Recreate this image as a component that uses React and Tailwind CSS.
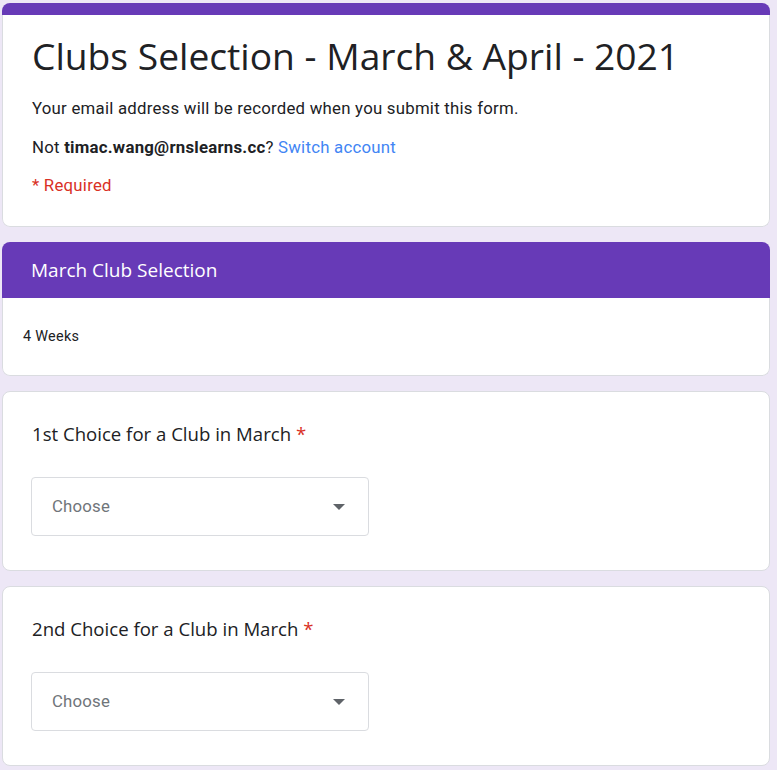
export default function App() {
  const gs = { fontFamily: '"Open Sans", "Liberation Sans", sans-serif' };
  const rb = { fontFamily: 'Roboto, "Liberation Sans", sans-serif' };
  const Arrow = () => (
    <svg width="12" height="6" viewBox="0 0 12 6" className="block">
      <path d="M0 0 L12 0 L6 6 Z" fill="#5f6368" />
    </svg>
  );
  const Question = ({ title }) => (
    <div className="bg-white border border-[#dadce0] rounded-lg h-[180px] pl-[29px] pt-[28px]">
      <div className="h-[28px] flex items-center text-[18.6px] text-[#202124]" style={gs}>
        <span>{title}</span>
        <span className="text-[#d93025] ml-[5px]">*</span>
      </div>
      <div className="mt-[29px] -ml-[1px] w-[338px] h-[59px] border border-[#dadce0] rounded-[4px] flex items-center justify-between pl-[20px] pr-[23px]">
        <span className="text-[16.8px] tracking-[0.2px] text-[#70757a]" style={rb}>Choose</span>
        <Arrow />
      </div>
    </div>
  );
  return (
    <div className="min-h-[770px] bg-[#ede7f6] pl-[2px] pr-[7px] pt-[3px] flex flex-col gap-[15px]">
      <div className="rounded-lg overflow-hidden">
        <div className="h-[12px] bg-[#673ab7]" />
        <div className="bg-white border-x border-b border-[#dadce0] rounded-b-lg h-[212px] pl-[29px] pt-[17px]">
          <div className="text-[37.2px] leading-[48px] text-[#202124]" style={gs}>
            Clubs Selection - March &amp; April - 2021
          </div>
          <div className="mt-[16px] text-[16.8px] tracking-[0.24px] leading-[24px] text-[#202124]" style={rb}>
            Your email address will be recorded when you submit this form.
          </div>
          <div className="mt-[15px] text-[16.8px] tracking-[0.24px] leading-[24px] text-[#202124]" style={rb}>
            Not <span className="font-bold">timac.wang@rnslearns.cc</span>?{" "}
            <span className="text-[#4285f4]">Switch account</span>
          </div>
          <div className="mt-[14px] text-[16.8px] tracking-[0.24px] leading-[24px] text-[#d93025]" style={rb}>
            * Required
          </div>
        </div>
      </div>
      <div className="rounded-lg overflow-hidden">
        <div className="h-[56px] bg-[#673ab7] flex items-center pl-[29px] text-white text-[19px]" style={gs}>
          March Club Selection
        </div>
        <div className="bg-white border-x border-b border-[#dadce0] rounded-b-lg h-[78px] flex items-center pl-[20px] text-[14.4px] tracking-[0.3px] text-[#202124]" style={rb}>
          4 Weeks
        </div>
      </div>
      <Question title="1st Choice for a Club in March" />
      <Question title="2nd Choice for a Club in March" />
    </div>
  );
}
